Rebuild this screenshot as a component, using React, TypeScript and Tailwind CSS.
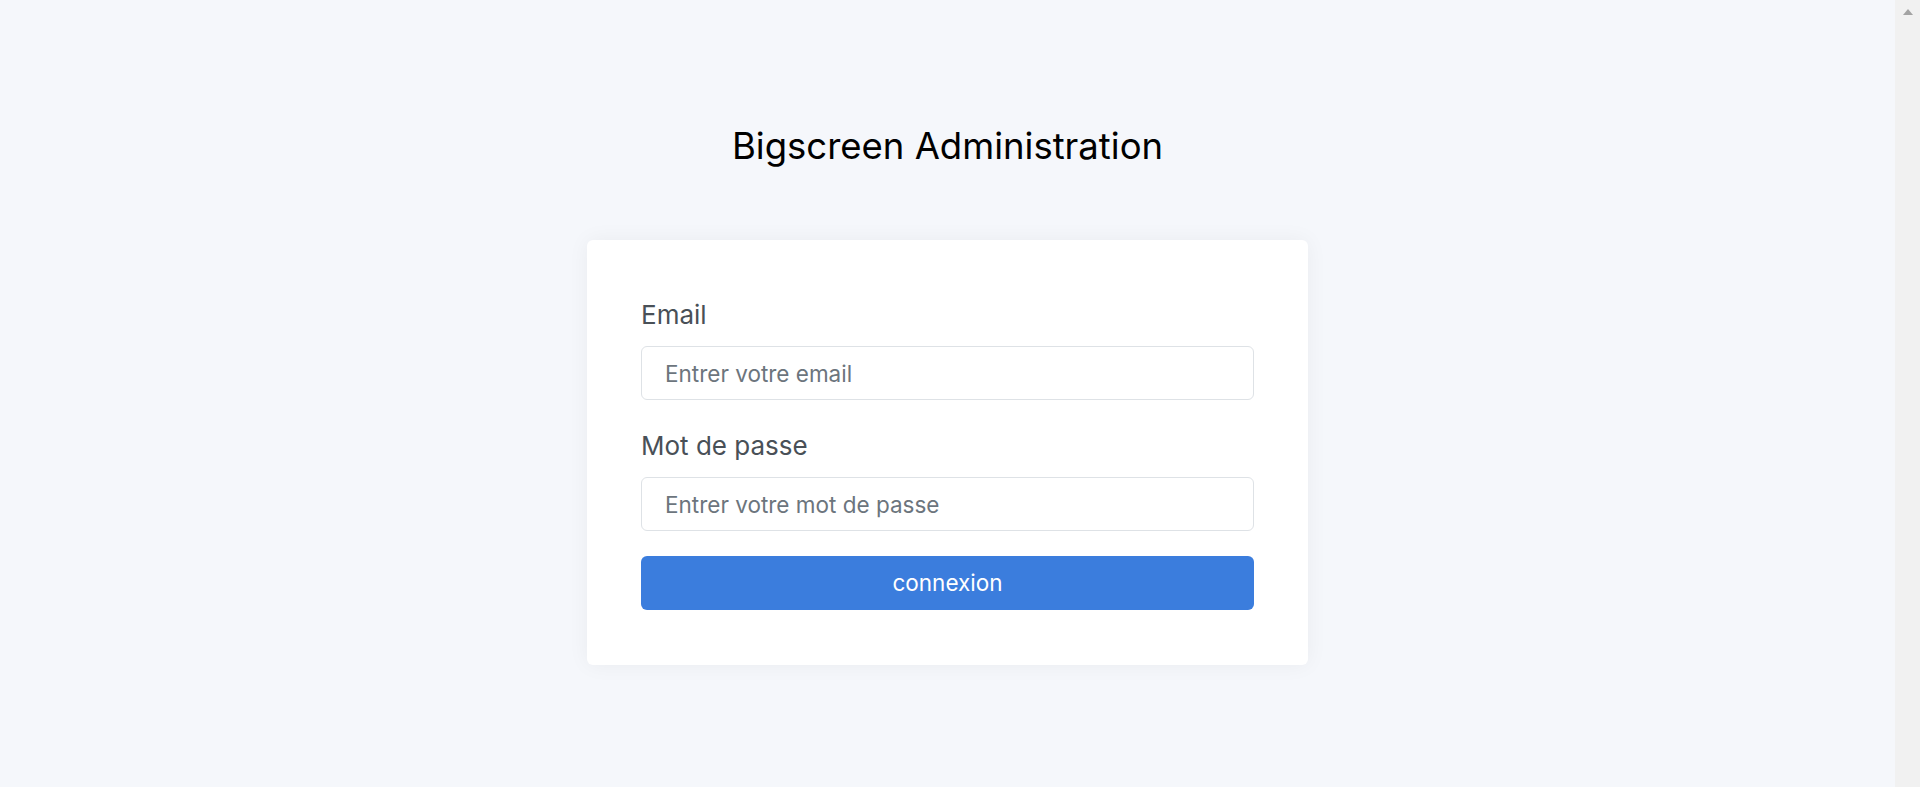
export default function App() {
  return (
    <div className="flex h-[787px] w-full overflow-hidden bg-[#f5f7fb] font-['Inter',sans-serif]">
      <main className="flex flex-1 flex-col items-center pt-[122px]">
        <h1 className="text-[36.5px] leading-[48px] font-normal text-black">Bigscreen Administration</h1>

        {/* Login card */}
        <form className="mt-[70px] w-[721px] rounded-[6px] bg-white px-[54px] pt-[54px] pb-[55px] shadow-[0_0_21px_0_rgba(33,37,41,0.05)]">
          <label className="mb-[10px] block text-[26px] leading-[42px] text-[#495057]">Email</label>
          <input
            type="email"
            placeholder="Entrer votre email"
            className="block h-[54px] w-full rounded-[6px] border border-[#dee2e6] bg-white pl-[23px] text-[22.5px] text-[#495057] placeholder:text-[#6c757d] outline-none"
          />

          <label className="mt-[25px] mb-[10px] block text-[26px] leading-[42px] text-[#495057]">Mot de passe</label>
          <input
            type="password"
            placeholder="Entrer votre mot de passe"
            className="block h-[54px] w-full rounded-[6px] border border-[#dee2e6] bg-white pl-[23px] text-[22.5px] text-[#495057] placeholder:text-[#6c757d] outline-none"
          />

          <button
            type="button"
            className="mt-[25px] block h-[54px] w-full rounded-[6px] bg-[#3b7ddd] text-[22.5px] text-white"
          >
            connexion
          </button>
        </form>
      </main>

      {/* Scrollbar */}
      <div className="flex w-[25px] shrink-0 justify-center bg-[#f1f1f1] pt-[9px]">
        <svg width="10" height="6" viewBox="0 0 10 6">
          <polygon points="5,0 10,6 0,6" fill="#a3a3a3" />
        </svg>
      </div>
    </div>
  );
}
